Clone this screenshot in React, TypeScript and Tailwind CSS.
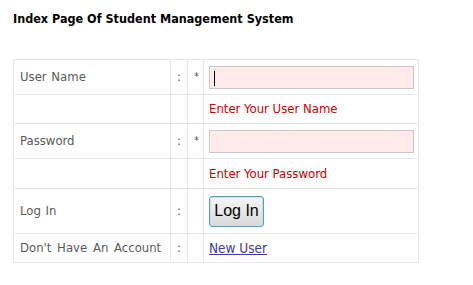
import React from "react";

const cell = "border border-[#e6e6e6] px-[6px] align-middle";

export default function App() {
    return (
        <div className="w-[473px] h-[285px] bg-white font-['DejaVu_Sans_Condensed','DejaVu_Sans',sans-serif] text-[13px] text-[#5a5a5a]">
            <div className="pl-[13px] pt-[12px] h-[59px]">
                <h1 className="font-bold text-[12.5px] text-black leading-[14px]">
                    Index Page Of Student Management System
                </h1>
            </div>
            <table className="ml-[13px] border-collapse table-fixed w-[406px]">
                <colgroup>
                    <col className="w-[157px]" />
                    <col className="w-[17px]" />
                    <col className="w-[16px]" />
                    <col />
                </colgroup>
                <tbody>
                    <tr className="h-[35px]">
                        <td className={`${cell} [word-spacing:1px]`}>User Name</td>
                        <td className={`${cell} px-0 text-center`}>:</td>
                        <td className={`${cell} px-0 text-center text-[11px]`}>*</td>
                        <td className={`${cell} pl-[5px]`}>
                            <div className="relative h-[23px] w-[205px] border border-[#c8c8c8] bg-[#ffeaea]">
                                <span className="absolute left-[4px] top-[4px] h-[15px] w-px bg-black" />
                            </div>
                        </td>
                    </tr>
                    <tr className="h-[29px]">
                        <td className={cell}></td>
                        <td className={cell}></td>
                        <td className={cell}></td>
                        <td className={`${cell} pl-[5px] text-[#cc0000]`}>Enter Your User Name</td>
                    </tr>
                    <tr className="h-[35px]">
                        <td className={cell}>Password</td>
                        <td className={`${cell} px-0 text-center`}>:</td>
                        <td className={`${cell} px-0 text-center text-[11px]`}>*</td>
                        <td className={`${cell} pl-[5px]`}>
                            <div className="h-[23px] w-[205px] border border-[#c8c8c8] bg-[#ffeaea]" />
                        </td>
                    </tr>
                    <tr className="h-[30px]">
                        <td className={cell}></td>
                        <td className={cell}></td>
                        <td className={cell}></td>
                        <td className={`${cell} pl-[5px] text-[#cc0000]`}>Enter Your Password</td>
                    </tr>
                    <tr className="h-[45px]">
                        <td className={`${cell} [word-spacing:1px]`}>Log In</td>
                        <td className={`${cell} px-0 text-center`}>:</td>
                        <td className={cell}></td>
                        <td className={`${cell} pl-[5px]`}>
                            <button className="h-[31px] w-[55px] rounded-[3px] border border-[#5a9fb8] bg-gradient-to-b from-[#f6f6f6] to-[#d8d8d8] font-['Liberation_Sans',sans-serif] text-[16px] text-black shadow-[inset_0_0_0_1px_#bfe3f0]">
                                Log In
                            </button>
                        </td>
                    </tr>
                    <tr className="h-[29px]">
                        <td className={`${cell} whitespace-nowrap [word-spacing:2px]`}>Don't Have An Account</td>
                        <td className={`${cell} px-0 text-center`}>:</td>
                        <td className={cell}></td>
                        <td className={`${cell} pl-[5px]`}>
                            <a href="#" className="text-[13.5px] text-[#3b3b9a] underline">New User</a>
                        </td>
                    </tr>
                </tbody>
            </table>
        </div>
    );
}
